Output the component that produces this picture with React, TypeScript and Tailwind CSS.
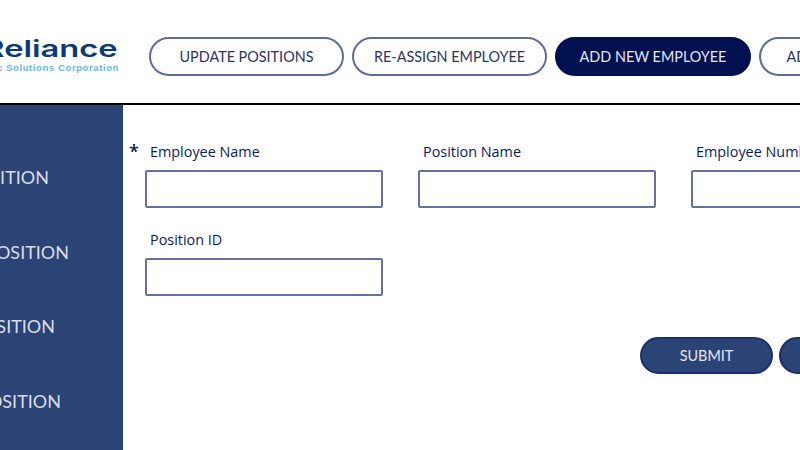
import React from 'react';

const tabs = [
  { label: 'UPDATE POSITIONS', width: 'w-[195px]', active: false },
  { label: 'RE-ASSIGN EMPLOYEE', width: 'w-[195px]', active: false },
  { label: 'ADD NEW EMPLOYEE', width: 'w-[196px]', active: true },
  { label: 'ADD NEW POSITION', width: 'w-[195px]', active: false },
];

const sideItems = [
  { label: 'ADD POSITION', width: 'w-[49px]' },
  { label: 'REMOVE POSITION', width: 'w-[69px]' },
  { label: 'EDIT POSITION', width: 'w-[55px]' },
  { label: 'VIEW POSITION', width: 'w-[61px]' },
];

function Field({ label, required }: { label: string; required?: boolean }) {
  return (
    <div className="relative w-[238px]">
      {required && (
        <span className="absolute left-[-16px] top-[-3px] text-[18px] leading-[24px] font-semibold font-['Open_Sans',sans-serif] text-[#0a1a5c]">*</span>
      )}
      <div className="pl-[5px] h-[28px] text-[14.4px] leading-[20px] font-medium font-['Open_Sans',sans-serif] text-[#0b1b5c] whitespace-nowrap">{label}</div>
      <input className="block w-full h-[38px] border-2 border-[#65719e] rounded-[2px] bg-white" />
    </div>
  );
}

export default function App() {
  return (
    <div className="w-[800px] h-[450px] overflow-hidden bg-white flex flex-col font-['Lato',sans-serif]">
      {/* Header */}
      <header className="h-[105px] shrink-0 border-b-2 border-black flex items-start">
        <div className="w-[119px] shrink-0 mt-[38px] flex flex-col items-end">
          <div className="h-[24px] mr-[1px] origin-right scale-x-[1.42] whitespace-nowrap font-['Inter',sans-serif] font-semibold text-[23px] leading-[23px] text-[#0c3a78]">
            Reliance
          </div>
          <div className="h-[12px] whitespace-nowrap font-['Liberation_Sans',sans-serif] font-bold text-[9.5px] leading-[12px] tracking-[0.6px] text-[#5fb8ee]">
            Electronic Solutions Corporation
          </div>
        </div>
        <nav className="ml-[30px] mt-[37px] flex gap-[8px] shrink-0">
          {tabs.map((t) => (
            <div
              key={t.label}
              className={`${t.width} h-[39px] shrink-0 rounded-[20px] flex items-center justify-center text-[14.4px] whitespace-nowrap border-2 ${
                t.active
                  ? 'bg-[#01114f] border-[#01114f] text-[#e4e7f1]'
                  : 'bg-white border-[#5f6c98] text-[#2b3560]'
              }`}
            >
              {t.label}
            </div>
          ))}
        </nav>
      </header>

      <div className="flex flex-1 min-h-0">
        {/* Sidebar */}
        <aside className="w-[123px] shrink-0 bg-[#2c4375] pt-[60px] flex flex-col gap-[49.6px]">
          {sideItems.map((s) => (
            <div key={s.label} className={`${s.width} h-[25px] flex justify-end whitespace-nowrap text-[18px] leading-[25px] text-[#d9deea]`}>
              {s.label}
            </div>
          ))}
        </aside>

        {/* Form */}
        <main className="pl-[22px] pt-[37px] flex-1 min-w-0">
          <div className="flex gap-[35px] w-[800px]">
            <Field label="Employee Name" required />
            <Field label="Position Name" />
            <Field label="Employee Number" />
          </div>
          <div className="mt-[22px]">
            <Field label="Position ID" />
          </div>
          <div className="mt-[41px] pl-[495px] flex gap-[6px] w-[800px]">
            <div className="w-[133px] h-[37px] rounded-[19px] bg-[#2c4375] border-2 border-[#1c2f6d] flex items-center justify-center text-[14.4px] text-[#e4e7f1]">
              SUBMIT
            </div>
            <div className="w-[133px] h-[37px] rounded-[19px] bg-[#2c4375] border-2 border-[#1c2f6d] flex items-center justify-center text-[14.4px] text-[#e4e7f1]">
              CANCEL
            </div>
          </div>
        </main>
      </div>
    </div>
  );
}
